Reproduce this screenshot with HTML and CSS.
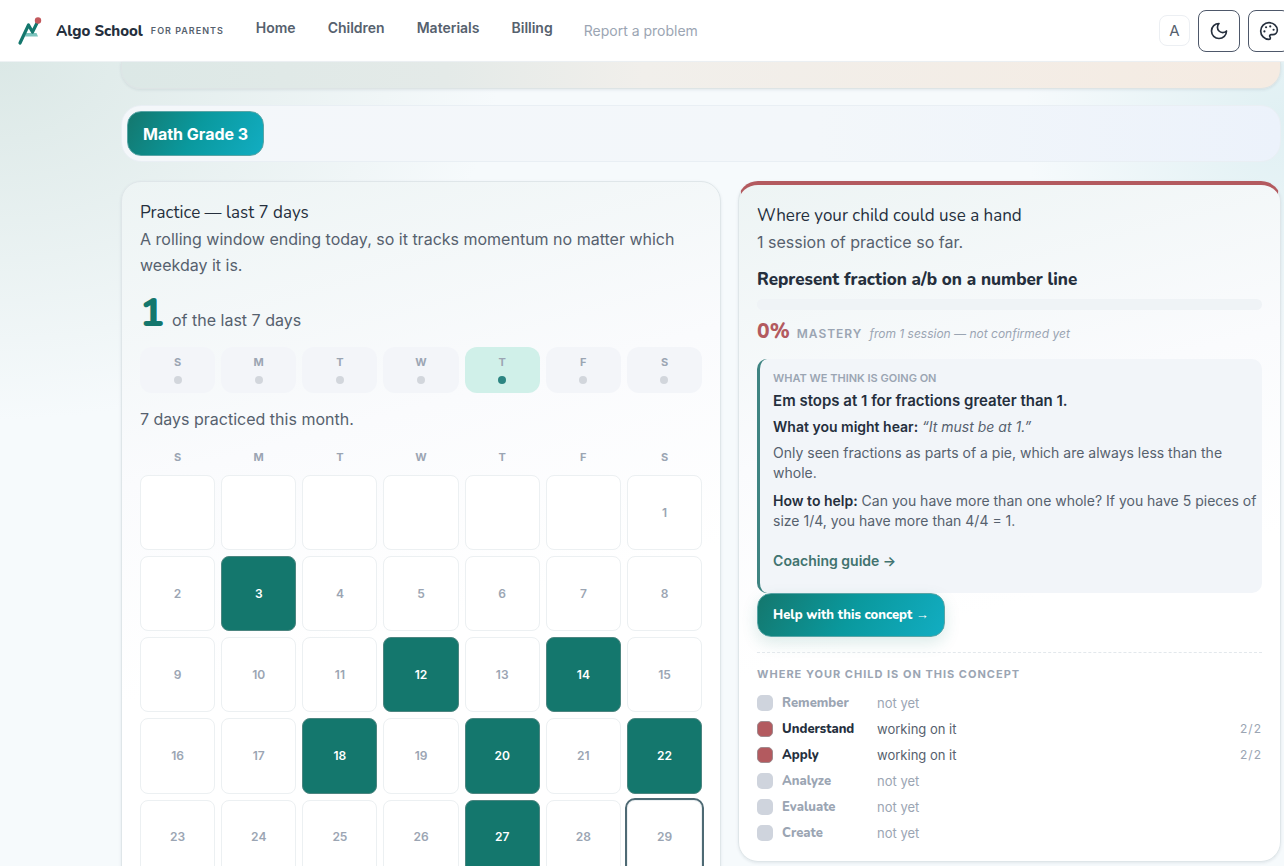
FILE: index.html
```
<!DOCTYPE html>
<html lang="en">

<head>
  <meta charset="UTF-8">
  <meta name="viewport" content="width=device-width, initial-scale=1.0">
  <title>Algo School for Parents</title>
  <link rel="stylesheet" href="styles.css">
</head>

<body>
  <header class="topbar">
    <a href="#" class="brand">
      <svg class="brand-logo" viewBox="0 0 28 30" aria-hidden="true">
        <path d="M10 17h10.500l1.500 3.500H9z" fill="#7cc4bd" />
        <path d="M4 27L12.500 9l4 7L21 7" fill="none" stroke="#14776d" stroke-width="3.200" stroke-linecap="round" stroke-linejoin="round" />
        <circle cx="22" cy="4.500" r="3.200" fill="#c2585c" />
      </svg>
      <span class="brand-name">Algo School</span>
      <span class="brand-sub">FOR PARENTS</span>
    </a>
    <nav class="nav">
      <a href="#">Home</a>
      <a href="#">Children</a>
      <a href="#">Materials</a>
      <a href="#">Billing</a>
    </nav>
    <a href="#" class="report">Report a problem</a>
    <div class="actions">
      <button type="button" class="text-size" aria-label="Text size">A</button>
      <button type="button" class="icon-button" aria-label="Dark mode">
        <svg viewBox="0 0 24 24"><path d="M12 3a6 6 0 0 0 9 9 9 9 0 1 1-9-9z" /></svg>
      </button>
      <button type="button" class="icon-button" aria-label="Theme colours">
        <svg viewBox="0 0 24 24">
          <path d="M12 2C6.500 2 2 6.500 2 12s4.500 10 10 10c.930 0 1.650-.750 1.650-1.690 0-.440-.180-.830-.440-1.120-.290-.290-.440-.650-.440-1.130a1.640 1.640 0 0 1 1.670-1.670h2c3.050 0 5.560-2.500 5.560-5.550C21.970 6.010 17.460 2 12 2z" />
          <circle class="dot" cx="13.500" cy="6.500" r="1.300" />
          <circle class="dot" cx="17.500" cy="10.500" r="1.300" />
          <circle class="dot" cx="8.500" cy="7.500" r="1.300" />
          <circle class="dot" cx="6.500" cy="12.500" r="1.300" />
        </svg>
      </button>
    </div>
  </header>

  <main class="page">
    <div class="hero"></div>

    <div class="tabs">
      <button type="button" class="primary tab">Math Grade 3</button>
    </div>

    <div class="columns">
      <section class="card">
        <h2 class="card-title">Practice — last 7 days</h2>
        <p class="lead">A rolling window ending today, so it tracks momentum no matter which weekday it is.</p>
        <p class="count"><strong>1</strong> of the last 7 days</p>

        <ul class="week">
          <li>S<i></i></li>
          <li>M<i></i></li>
          <li>T<i></i></li>
          <li>W<i></i></li>
          <li class="active">T<i></i></li>
          <li>F<i></i></li>
          <li>S<i></i></li>
        </ul>

        <p class="lead">7 days practiced this month.</p>

        <div class="weekdays">
          <span>S</span><span>M</span><span>T</span><span>W</span><span>T</span><span>F</span><span>S</span>
        </div>
        <div class="month">
          <span></span><span></span><span></span><span></span><span></span><span></span><span>1</span>
          <span>2</span><span class="done">3</span><span>4</span><span>5</span><span>6</span><span>7</span><span>8</span>
          <span>9</span><span>10</span><span>11</span><span class="done">12</span><span>13</span><span class="done">14</span><span>15</span>
          <span>16</span><span>17</span><span class="done">18</span><span>19</span><span class="done">20</span><span>21</span><span class="done">22</span>
          <span>23</span><span>24</span><span>25</span><span>26</span><span class="done">27</span><span>28</span><span class="today">29</span>
        </div>
      </section>

      <section class="card help-card">
        <h2 class="card-title">Where your child could use a hand</h2>
        <p class="lead">1 session of practice so far.</p>
        <h3 class="concept">Represent fraction a/b on a number line</h3>
        <div class="meter"></div>
        <p class="mastery"><strong>0%</strong> <span>MASTERY</span> <em>from 1 session — not confirmed yet</em></p>

        <div class="insight">
          <h4>WHAT WE THINK IS GOING ON</h4>
          <p class="insight-title">Em stops at 1 for fractions greater than 1.</p>
          <p class="hear"><b>What you might hear:</b> <em>“It must be at 1.”</em></p>
          <p>Only seen fractions as parts of a pie, which are always less than the whole.</p>
          <p><b>How to help:</b> Can you have more than one whole? If you have 5 pieces of size 1/4, you have more than 4/4 = 1.</p>
          <a href="#" class="guide">Coaching guide →</a>
        </div>
        <button type="button" class="primary help">Help with this concept →</button>

        <div class="levels">
          <h4>WHERE YOUR CHILD IS ON THIS CONCEPT</h4>
          <ul>
            <li><i></i><b>Remember</b><span>not yet</span></li>
            <li class="working"><i></i><b>Understand</b><span>working on it</span><small>2/2</small></li>
            <li class="working"><i></i><b>Apply</b><span>working on it</span><small>2/2</small></li>
            <li><i></i><b>Analyze</b><span>not yet</span></li>
            <li><i></i><b>Evaluate</b><span>not yet</span></li>
            <li><i></i><b>Create</b><span>not yet</span></li>
          </ul>
        </div>
      </section>
    </div>
  </main>
</body>

</html>
```
FILE: styles.css
```
* {
  margin: 0;
  padding: 0;
  box-sizing: border-box;
}

:root {
  --ink: #252f3d;
  --body: #56616e;
  --muted: #9ba5b3;
  --teal: #14776d;
  --red: #b35a5f;
  --heading: Nunito, "Open Sans", sans-serif;
}

html,
body {
  height: 100%;
  overflow: hidden;
}

body {
  font-family: Inter, sans-serif;
  font-size: 16px;
  line-height: 26px;
  color: var(--body);
  background:
    radial-gradient(ellipse 500px 360px at 0 60px, #dbe8e6, transparent),
    radial-gradient(ellipse 260px 260px at 100% 120px, #e0f0f3, transparent),
    #f6fafc;
}

a {
  color: inherit;
  text-decoration: none;
}

ul {
  list-style: none;
}

button {
  font: inherit;
  cursor: pointer;
}

/* Header */
.topbar {
  display: flex;
  align-items: center;
  height: 62px;
  padding-left: 16px;
  background: #fff;
  border-bottom: 1px solid #eef2f4;
  white-space: nowrap;
}

.brand {
  display: flex;
  align-items: center;
}

.brand-logo {
  width: 28px;
  height: 30px;
  margin-right: 12px;
}

.brand-name {
  font-family: var(--heading);
  font-size: 15px;
  font-weight: 800;
  color: var(--ink);
}

.brand-sub {
  margin-left: 8px;
  font-size: 9px;
  font-weight: 600;
  letter-spacing: 1px;
}

.nav {
  display: flex;
  gap: 32px;
  margin-left: 32px;
  padding-bottom: 6px;
  font-size: 14px;
  font-weight: 600;
}

.report {
  margin-left: 31px;
  font-size: 14px;
  color: var(--muted);
}

.actions {
  display: flex;
  align-items: center;
  gap: 8px;
  margin-left: auto;
  margin-right: -6px;
}

.text-size {
  width: 31px;
  height: 31px;
  font-size: 15px;
  background: #fff;
  border: 1px solid #eceff3;
  border-radius: 8px;
  color: var(--body);
}

.icon-button {
  display: grid;
  place-items: center;
  width: 42px;
  height: 42px;
  background: #fff;
  border: 1px solid #4e586a;
  border-radius: 8px;
}

.icon-button svg {
  width: 20px;
  height: 20px;
  fill: none;
  stroke: var(--ink);
  stroke-width: 2;
  stroke-linecap: round;
  stroke-linejoin: round;
}

.icon-button .dot {
  fill: var(--ink);
  stroke: none;
}

/* Page */
.page {
  padding: 0 3px 0 121px;
}

.hero {
  height: 27px;
  background: linear-gradient(90deg, #dce8e6, #e4eae8 28%, #f1efeb 45%, #f5ebe2);
  border: 1px solid #dde4e5;
  border-top: 0;
  border-radius: 0 0 20px 20px;
  box-shadow: 0 1px 3px rgba(50, 70, 90, 0.1);
}

.tabs {
  margin: 16px 0 19px;
  padding: 5px;
  background: linear-gradient(90deg, #f4f7fa, #f3f7fa 60%, #ecf2fb);
  border: 1px solid #e9eff4;
  border-radius: 20px;
}

.primary {
  display: block;
  height: 44px;
  padding: 0 15px;
  color: #fff;
  background: linear-gradient(120deg, #14776d, #0a999e 50%, #12adc2);
  border: 1px solid #5aa5a6;
  border-radius: 14px;
}

.tab {
  height: 45px;
  font-weight: 700;
}

.columns {
  display: grid;
  grid-template-columns: 21fr 19fr;
  align-items: start;
  gap: 17px;
}

.card {
  padding: 18px;
  background: linear-gradient(165deg, #edf4f4, #fafbfd 35%, #fff 60%);
  border: 1px solid #dfe6e9;
  border-radius: 20px;
  box-shadow: 0 1px 3px rgba(50, 70, 90, 0.1);
}

.help-card {
  padding-bottom: 15px;
  border-top: 4px solid var(--red);
}

.card-title {
  font-family: var(--heading);
  font-size: 17px;
  font-weight: 400;
  color: var(--ink);
}

.count {
  display: flex;
  align-items: baseline;
  gap: 8px;
  margin: 13px 0 12px;
}

.count strong {
  font-family: var(--heading);
  font-size: 40px;
  font-weight: 800;
  line-height: 44px;
  color: var(--teal);
}

.week,
.weekdays,
.month {
  display: grid;
  grid-template-columns: repeat(7, 1fr);
  gap: 6px;
  text-align: center;
  font-weight: 700;
  font-size: 11px;
  color: var(--muted);
}

.week {
  margin-bottom: 13px;
}

.week li {
  display: flex;
  flex-direction: column;
  align-items: center;
  gap: 8px;
  height: 46px;
  padding-top: 9px;
  line-height: 12px;
  background: #f3f5f9;
  border-radius: 12px;
}

.week i {
  width: 8px;
  height: 8px;
  border-radius: 50%;
  background: #d2d6dc;
}

.week .active {
  background: #d0f0e9;
}

.week .active i {
  background: #2c8582;
}

.weekdays {
  margin: 12px 0 5px;
}

.month span {
  display: grid;
  place-items: center;
  aspect-ratio: 1;
  font-size: 12px;
  font-weight: 600;
  background: #fff;
  border: 1px solid #ecf0f2;
  border-radius: 8px;
}

.month .done {
  color: #fff;
  background: var(--teal);
  border-color: #4c8580;
}

.month .today {
  outline: 2px solid #4e6a74;
}

/* Concept card */
.concept {
  margin: 12px 0 6px;
  font-family: var(--heading);
  font-size: 17px;
  font-weight: 800;
  color: var(--ink);
}

.meter {
  height: 11px;
  background: #eff3f6;
  border-radius: 6px;
}

.mastery {
  display: flex;
  align-items: baseline;
  gap: 7px;
  margin: 8px 0 12px;
  font-size: 12px;
  color: var(--muted);
}

.mastery strong {
  font-family: var(--heading);
  font-size: 21px;
  font-weight: 800;
  color: var(--red);
}

.mastery span {
  font-weight: 600;
  letter-spacing: 1px;
}

.insight {
  padding: 10px 2px 22px 13px;
  font-size: 14px;
  line-height: 20px;
  background: #f2f5f9;
  border-left: 3px solid #3f8482;
  border-radius: 10px;
}

.insight h4,
.levels h4 {
  font-size: 11px;
  font-weight: 600;
  line-height: 18px;
  color: var(--muted);
}

.insight p {
  margin-bottom: 8px;
}

.insight b,
.insight .insight-title {
  font-weight: 600;
  color: var(--ink);
}

.insight .insight-title {
  margin: 4px 0 6px;
  font-size: 15px;
}

.insight .hear {
  margin-bottom: 6px;
}

.guide {
  display: block;
  margin-top: 20px;
  font-weight: 600;
  color: #41736f;
}

.help {
  font-family: var(--heading);
  font-size: 13px;
  font-weight: 800;
  box-shadow: 0 6px 16px rgba(20, 119, 109, 0.15);
}

.levels {
  margin-top: 15px;
  padding-top: 12px;
  border-top: 1px dashed #e3e8ec;
}

.levels h4 {
  margin-bottom: 7px;
  font-weight: 700;
  letter-spacing: 1px;
}

.levels li {
  display: grid;
  grid-template-columns: 16px 86px 1fr auto;
  column-gap: 9px;
  align-items: center;
  font-size: 13px;
  color: var(--muted);
}

.levels i {
  width: 16px;
  height: 16px;
  background: #cfd4dd;
  border-radius: 5px;
}

.levels b {
  font-family: var(--heading);
  font-weight: 800;
}

.levels small {
  font-size: 12px;
  letter-spacing: 1px;
  color: var(--muted);
}

.levels .working {
  color: var(--body);
}

.levels .working i {
  background: var(--red);
  border: 1px solid #a08a8e;
}

.working b {
  color: var(--ink);
}
```
